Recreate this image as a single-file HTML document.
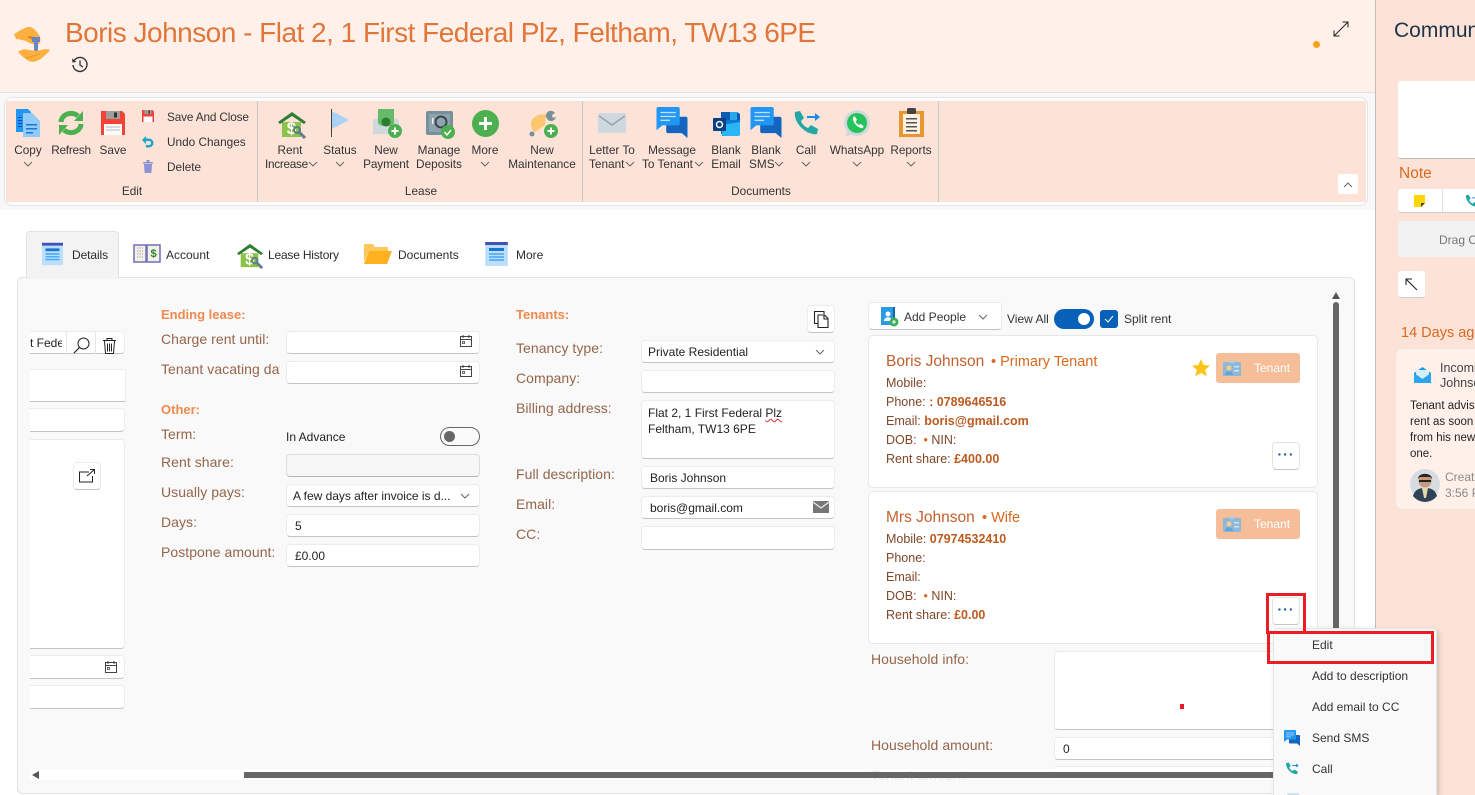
<!DOCTYPE html>
<html><head><meta charset="utf-8"><title>Boris Johnson</title>
<style>
html,body{margin:0;padding:0}
body{width:1475px;height:795px;overflow:hidden;position:relative;background:#fff;font-family:"Liberation Sans",sans-serif;font-size:12px;color:#333}
.a,.t,.c,.i,.l,svg.s{position:absolute}
.t{white-space:nowrap;line-height:16px}
.c{white-space:nowrap;line-height:16px;width:100px;text-align:center}
.r{color:#333;font-size:11.8px}
.l{white-space:nowrap;line-height:16px;font-size:14px;color:#95654a;letter-spacing:.05px}
.h{position:absolute;white-space:nowrap;line-height:16px;font-size:13px;font-weight:bold;color:#ee8a4e}
.i{box-sizing:border-box;background:#fff;border:1px solid #ececec;border-bottom:1px solid #c4c4c4;border-radius:4px}
.v{position:absolute;white-space:nowrap;line-height:16px;font-size:12px;color:#222}
.k{position:absolute;white-space:nowrap;line-height:16px;font-size:12.5px;color:#7f4526}
.k b{color:#bd5a1f;font-weight:bold}
.card{position:absolute;box-sizing:border-box;left:868px;width:450px;height:153px;background:#fff;border:1px solid #e8e8e8;border-radius:5px}
.tag{position:absolute;left:1216px;width:84px;height:30px;background:#f5bd98;border-radius:3px;color:#fff;line-height:30px;font-size:12px;text-indent:38px}
.dots{position:absolute;box-sizing:border-box;left:1272px;width:28px;height:28px;background:#fff;border:1px solid #e4e4e4;border-bottom:1px solid #c4c4c4;border-radius:4px;color:#174f8c;text-align:center;line-height:22px;font-size:14px;font-weight:bold;letter-spacing:1px}
.m{position:absolute;left:1312px;white-space:nowrap;line-height:16px;font-size:12px;color:#333}
svg{overflow:visible}
</style></head><body>
<svg width="0" height="0" style="position:absolute">
<symbol id="chev" viewBox="0 0 10 6"><path d="M1 1l4 4 4-4" fill="none" stroke="#666" stroke-width="1"/></symbol>
<symbol id="bubble" viewBox="0 0 32 32"><path d="M10 10h20a2 2 0 012 2v20l-6-5H12a2 2 0 01-2-2z" fill="#1565c0"/><path d="M2 0h20a2 2 0 012 2v15a2 2 0 01-2 2H6l-6 5V2a2 2 0 012-2z" fill="#2196f3"/><path d="M4 5h16v1.500H4zM4 9h16v1.500H4zM4 13h10v1.500H4z" fill="#bbdefb"/></symbol>
<symbol id="phone" viewBox="0 0 27 26"><path d="M2 2l5-1 4 7-3 3c1 3 4 6 7 7l3-3 7 4-1 5c-10 2-24-11-22-22z" fill="#26a6a6"/><path d="M14 6h8V3l5 4-5 4V8h-8z" fill="#1e88e5"/></symbol>
<symbol id="doc" viewBox="0 0 30 32"><rect y="0" width="30" height="32" fill="#bbdefb"/><rect width="30" height="4" fill="#3f51b5"/><rect x="5" y="8" width="20" height="4" fill="#1976d2"/><path d="M5 15h20v2H5zM5 19h20v2H5zM5 23h20v2H5z" fill="#42a5f5"/></symbol>
<symbol id="house" viewBox="0 0 28 28"><path d="M4 11h19v15H4z" fill="#8bc34a"/><path d="M0 11L14 1l14 10-2 2-12-8-12 8z" fill="#2e7d32"/><text x="13.500" y="23" font-size="17" font-weight="bold" fill="#fff" text-anchor="middle" font-family="Liberation Sans">$</text><path d="M20 20l7 7" stroke="#607d8b" stroke-width="3"/><circle cx="19" cy="19" r="3" fill="none" stroke="#607d8b" stroke-width="2"/></symbol>
<symbol id="cal" viewBox="0 0 12 12"><path d="M.5 1.500h11v10H.5zM.5 4.500h11M3 0v3M9 0v3" fill="none" stroke="#444"/><rect x="2.500" y="6.500" width="2" height="2" fill="none" stroke="#444" stroke-width=".8"/></symbol>
<symbol id="badge" viewBox="0 0 18 16"><rect y="2" width="18" height="14" rx="1" fill="#8fb8d8"/><circle cx="6" cy="8" r="2.500" fill="#f8cf8a"/><path d="M2 15c0-5 8-5 8 0z" fill="#5fa5d8"/><path d="M11 6h5v1.500h-5zM11 10h5v1.500h-5z" fill="#cfe3f2"/><rect x="7" y="0" width="4" height="3" fill="#b9cbd8"/></symbol>
</svg>

<!-- header -->
<div class="a" style="left:0;top:0;width:1375px;height:93px;background:#fff1ea;border-bottom:1px solid #e2e2e2;box-sizing:border-box"></div>
<svg class="s" style="left:13px;top:26px" width="38" height="37" viewBox="0 0 38 37"><path d="M1 8c4-2 9-6 14-7 4-1 8 3 11 8 2 3 2 6 0 9-4 1-9 0-13-3C9 14 5 13 3 13z" fill="#fbb040"/><path d="M14 11c3-2 7-1 9 2l-4 1z" fill="#d98a1e"/><path d="M19 11h8v5h-2v8l-2 3-2-3v-8h-2z" fill="#6a83c4"/><path d="M5 26c3-3 8-3 11-2l8 1c4-1 8-3 13-1-2 3-5 5-8 8-4 3-9 5-13 3-4-2-8-6-11-9z" fill="#fbb040"/><path d="M13 32l14-4" stroke="#e39a2d" stroke-width="1"/></svg>
<div class="t" style="left:65px;top:15px;line-height:36px;font-size:28px;color:#e0763a;letter-spacing:-.51px">Boris Johnson - Flat 2, 1 First Federal Plz, Feltham, TW13 6PE</div>
<svg class="s" style="left:71px;top:56px" width="17" height="17" viewBox="0 0 17 17"><path d="M3.200 4.500A7 7 0 112 9" fill="none" stroke="#333" stroke-width="1.400"/><path d="M1 2.500l.5 4 4-.5z" fill="#333"/><path d="M9 4.500V9l3 2" fill="none" stroke="#333" stroke-width="1.300"/></svg>
<div class="a" style="left:1313px;top:41px;width:7px;height:7px;border-radius:50%;background:#f9a11b"></div>
<svg class="s" style="left:1333px;top:21px" width="16" height="16" viewBox="0 0 16 16"><path d="M1 15L15 1M9.500 1H15v5.500M1 9.500V15h5.500" fill="none" stroke="#222" stroke-width="1"/></svg>

<!-- ribbon band -->
<div class="a" style="left:0;top:93px;width:1375px;height:117px;background:#f8f8f8"></div>
<div class="a" style="left:4px;top:97px;width:1364px;height:109px;box-sizing:border-box;background:#fff;border:1px solid #e4e4e4;border-radius:8px"></div>
<div class="a" style="left:6px;top:101px;width:1360px;height:101px;background:#fde3d7"></div>
<div class="a" style="left:257px;top:101px;width:1px;height:101px;background:#c4c8cc"></div>
<div class="a" style="left:582px;top:101px;width:1px;height:101px;background:#c4c8cc"></div>
<div class="a" style="left:938px;top:101px;width:1px;height:101px;background:#c4c8cc"></div>

<!-- ribbon icons -->
<svg class="s" style="left:16px;top:109px" width="24" height="28" viewBox="0 0 24 28"><path d="M0 0h12l3 3v20H0z" fill="#2196f3"/><path d="M7 4h9l8 8v16H7z" fill="#90caf9"/><path d="M10 15h11v1.500H10zM10 19h11v1.500H10zM10 23h7v1.500h-7z" fill="#1976d2"/><path d="M2 8h4v1H2zM2 11h4v1H2zM2 14h4v1H2zM2 17h4v1H2z" fill="#0d47a1"/></svg>
<svg class="s" style="left:59px;top:111px" width="24" height="24" viewBox="0 0 24 24"><path d="M2 11A10 9 0 0119 5" fill="none" stroke="#4caf50" stroke-width="5"/><path d="M15 10h9V0z" fill="#4caf50"/><path d="M22 13A10 9 0 015 19" fill="none" stroke="#4caf50" stroke-width="5"/><path d="M9 14H0v10z" fill="#4caf50"/></svg>
<svg class="s" style="left:101px;top:111px" width="24" height="24" viewBox="0 0 24 24"><path d="M0 0h21l3 3v21H0z" fill="#f44336"/><rect x="3" y="13" width="18" height="11" fill="#fafafa"/><path d="M5 16h14M5 19h14" stroke="#bbb"/><rect x="5" y="0" width="14" height="8" fill="#9e9e9e"/><rect x="13" y="1.500" width="3" height="5" fill="#333"/></svg>
<svg class="s" style="left:142px;top:110px" width="12" height="12" viewBox="0 0 24 24"><path d="M0 0h21l3 3v21H0z" fill="#f44336"/><rect x="3" y="13" width="18" height="11" fill="#fafafa"/><rect x="5" y="0" width="14" height="8" fill="#9e9e9e"/><rect x="13" y="1" width="3" height="6" fill="#333"/></svg>
<svg class="s" style="left:142px;top:136px" width="12" height="12" viewBox="0 0 12 12"><path d="M0 4l4-4v2.500h3a4.500 4.500 0 010 9H4V9h3a2 2 0 000-4H4v3z" fill="#1aa6c8"/></svg>
<svg class="s" style="left:143px;top:160px" width="10" height="13" viewBox="0 0 10 13"><path d="M0 2h10v1.500H0zM3.500 0h3v2h-3z" fill="#8b93d0"/><path d="M1 4h8l-.6 9H1.600z" fill="#8b93d0"/></svg>
<svg class="s" style="left:278px;top:111px" width="28" height="28"><use href="#house" width="28" height="28"/></svg>
<svg class="s" style="left:331px;top:109px" width="18" height="28" viewBox="0 0 18 28"><rect width="1" height="28" fill="#444"/><path d="M1 2l17 9-17 9z" fill="#a9d2f5"/></svg>
<svg class="s" style="left:373px;top:109px" width="29" height="29" viewBox="0 0 29 29"><path d="M0 11l13-6 13 6v14H0z" fill="#cfd8dc"/><rect x="5" y="0" width="16" height="17" fill="#66bb6a"/><circle cx="13" cy="13" r="4.500" fill="#2e7d32"/><path d="M0 11l13 9 13-9v14H0z" fill="#cfd8dc"/><circle cx="22" cy="22" r="7" fill="#4caf50"/><path d="M18.500 21h7v2h-7zM21 18.500h2v7h-2z" fill="#fff"/></svg>
<svg class="s" style="left:426px;top:111px" width="29" height="28" viewBox="0 0 29 28"><rect width="27" height="24" rx="2" fill="#78909c"/><rect x="3" y="3" width="21" height="18" fill="#90a4ae"/><circle cx="15" cy="11" r="5.500" fill="none" stroke="#37474f" stroke-width="2"/><rect x="6" y="7" width="1.500" height="6" fill="#eceff1"/><circle cx="22" cy="21" r="7" fill="#4caf50"/><path d="M18.500 21l2.500 3 4-5" fill="none" stroke="#fff" stroke-width="1.500"/></svg>
<svg class="s" style="left:472px;top:110px" width="27" height="27" viewBox="0 0 27 27"><circle cx="13.500" cy="13.500" r="13.500" fill="#4caf50"/><path d="M7 12h13v3H7zM12 7h3v13h-3z" fill="#fff"/></svg>
<svg class="s" style="left:529px;top:110px" width="29" height="28" viewBox="0 0 29 28"><path d="M3 10c3-5 10-7 14-5l-1 10-10 7c-4-2-5-8-3-12z" fill="#fdc66f"/><path d="M17 7a5 5 0 019-4l-3 2 1 3 3-1a5 5 0 01-8 3z" fill="#78909c"/><circle cx="3" cy="24" r="2.500" fill="#78909c"/><circle cx="22" cy="21" r="7" fill="#4caf50"/><path d="M18.500 20h7v2h-7zM21 17.500h2v7h-2z" fill="#fff"/></svg>
<svg class="s" style="left:598px;top:113px" width="28" height="20" viewBox="0 0 28 20"><rect width="28" height="20" rx="2" fill="#cfd8dc"/><path d="M1 3l13 9 13-9" fill="none" stroke="#90a4ae" stroke-width="1.400"/></svg>
<svg class="s" style="left:656px;top:107px" width="32" height="31"><use href="#bubble" width="32" height="31"/></svg>
<svg class="s" style="left:713px;top:111px" width="27" height="26" viewBox="0 0 27 26"><path d="M8 1h16l3 2v20H8z" fill="#0a5bb5"/><path d="M17 1h7v8h-7z" fill="#28a8ea"/><path d="M8 9h19v8H8z" fill="#0f78d4"/><path d="M9 14l18-3v12a2 2 0 01-2 2H9z" fill="#29b6f6"/><rect y="7" width="13" height="13" rx="1" fill="#0a3f80"/><circle cx="6.500" cy="13.500" r="3" fill="none" stroke="#fff" stroke-width="1.500"/></svg>
<svg class="s" style="left:750px;top:107px" width="32" height="31"><use href="#bubble" width="32" height="31"/></svg>
<svg class="s" style="left:793px;top:110px" width="27" height="26"><use href="#phone" width="27" height="26"/></svg>
<svg class="s" style="left:844px;top:110px" width="26" height="28" viewBox="0 0 26 28"><circle cx="13" cy="13" r="13" fill="#cfd8dc"/><path d="M1 27l3-7 5 4z" fill="#cfd8dc"/><circle cx="13" cy="13" r="10" fill="#25c35a"/><path d="M9 7l2-.5 2 3.500-1.500 1.500c.7 1.500 2 2.800 3.500 3.500L16.500 14l3 2-.5 2c-5 1-11-6-10-11z" fill="#fff"/></svg>
<svg class="s" style="left:899px;top:108px" width="25" height="29" viewBox="0 0 25 29"><rect y="3" width="25" height="26" fill="#e8962f"/><rect x="4" y="6" width="17" height="20" fill="#fdf1e3"/><rect x="8" y="0" width="9" height="6" rx="1.500" fill="#444"/><path d="M7 10h11v1.500H7zM7 14h11v1.500H7zM7 18h11v1.500H7zM7 22h11v1.500H7z" fill="#555"/></svg>

<!-- ribbon labels -->
<div class="c r" style="left:-22px;top:142px">Copy</div>
<svg class="s" style="left:23px;top:161px" width="10" height="6"><use href="#chev"/></svg>
<div class="c r" style="left:21px;top:142px;letter-spacing:-.25px">Refresh</div>
<div class="c r" style="left:63px;top:142px">Save</div>
<div class="t r" style="left:167px;top:109px;letter-spacing:-.15px">Save And Close</div>
<div class="t r" style="left:167px;top:134px">Undo Changes</div>
<div class="t r" style="left:167px;top:159px">Delete</div>
<div class="c r" style="left:82px;top:183px">Edit</div>

<div class="c r" style="left:240px;top:142px">Rent</div>
<div class="t r" style="left:265px;top:156px;letter-spacing:-.3px">Increase</div>
<svg class="s" style="left:308px;top:161px" width="10" height="6"><use href="#chev"/></svg>
<div class="c r" style="left:290px;top:142px">Status</div>
<svg class="s" style="left:335px;top:161px" width="10" height="6"><use href="#chev"/></svg>
<div class="c r" style="left:336px;top:142px">New</div>
<div class="c r" style="left:336px;top:156px;letter-spacing:-.1px">Payment</div>
<div class="c r" style="left:389px;top:142px">Manage</div>
<div class="c r" style="left:389px;top:156px">Deposits</div>
<div class="c r" style="left:435px;top:142px">More</div>
<svg class="s" style="left:480px;top:161px" width="10" height="6"><use href="#chev"/></svg>
<div class="c r" style="left:492px;top:142px">New</div>
<div class="c r" style="left:492px;top:156px">Maintenance</div>
<div class="c r" style="left:371px;top:183px">Lease</div>

<div class="c r" style="left:562px;top:142px">Letter To</div>
<div class="t r" style="left:589px;top:156px">Tenant</div>
<svg class="s" style="left:625px;top:161px" width="10" height="6"><use href="#chev"/></svg>
<div class="c r" style="left:622px;top:142px">Message</div>
<div class="t r" style="left:642px;top:156px">To Tenant</div>
<svg class="s" style="left:694px;top:161px" width="10" height="6"><use href="#chev"/></svg>
<div class="c r" style="left:676px;top:142px">Blank</div>
<div class="c r" style="left:676px;top:156px">Email</div>
<div class="c r" style="left:716px;top:142px">Blank</div>
<div class="t r" style="left:749px;top:156px">SMS</div>
<svg class="s" style="left:774px;top:161px" width="10" height="6"><use href="#chev"/></svg>
<div class="c r" style="left:756px;top:142px">Call</div>
<svg class="s" style="left:801px;top:161px" width="10" height="6"><use href="#chev"/></svg>
<div class="c r" style="left:807px;top:142px">WhatsApp</div>
<svg class="s" style="left:852px;top:161px" width="10" height="6"><use href="#chev"/></svg>
<div class="c r" style="left:861px;top:142px">Reports</div>
<svg class="s" style="left:906px;top:161px" width="10" height="6"><use href="#chev"/></svg>
<div class="c r" style="left:711px;top:183px">Documents</div>
<div class="a" style="left:1338px;top:174px;width:20px;height:20px;background:#fff;border-radius:3px"></div>
<svg class="s" style="left:1343px;top:182px" width="10" height="6" viewBox="0 0 10 6"><path d="M1 5l4-4 4 4" fill="none" stroke="#666"/></svg>

<!-- tabs -->
<div class="a" style="left:26px;top:231px;width:93px;height:47px;box-sizing:border-box;background:#f3f3f3;border:1px solid #e2e2e2;border-bottom:0;border-radius:4px 4px 0 0"></div>
<svg class="s" style="left:42px;top:242px" width="21" height="24"><use href="#doc" width="21" height="24"/></svg>
<div class="t" style="left:72px;top:247px;color:#2c2c2c;letter-spacing:-.1px">Details</div>
<svg class="s" style="left:133px;top:244px" width="28" height="20" viewBox="0 0 28 20"><path d="M1 1h12v17H1zM14 1h13v17H14z" fill="#f4f0e6" stroke="#6c6fb5" stroke-width="1.500"/><path d="M4 4h6M4 7h6M4 10h6M4 13h6" stroke="#aaa" stroke-dasharray="1.500 1"/><text x="20.500" y="13" font-size="11" font-weight="bold" fill="#2e7d32" text-anchor="middle" font-family="Liberation Sans">$</text></svg>
<div class="t" style="left:166px;top:247px;color:#2c2c2c">Account</div>
<svg class="s" style="left:237px;top:243px" width="26" height="26"><use href="#house" width="26" height="26"/></svg>
<div class="t" style="left:268px;top:247px;color:#2c2c2c;letter-spacing:-.2px">Lease History</div>
<svg class="s" style="left:364px;top:244px" width="28" height="20" viewBox="0 0 28 20"><path d="M0 0h9l2 3h13v4H5L0 18z" fill="#ffc65c"/><path d="M5 7h23l-5 13H0z" fill="#ffb01f"/></svg>
<div class="t" style="left:398px;top:247px;color:#2c2c2c">Documents</div>
<svg class="s" style="left:485px;top:242px" width="23" height="24"><use href="#doc" width="23" height="24"/></svg>
<div class="t" style="left:516px;top:247px;color:#2c2c2c">More</div>

<!-- main panel -->
<div class="a" style="left:17px;top:277px;width:1338px;height:517px;box-sizing:border-box;background:#f9f9f9;border:1px solid #e2e2e2;border-radius:6px"></div>
<div class="a" style="left:27px;top:277px;width:91px;height:2px;background:#f3f3f3"></div>

<!-- clipped left column -->
<div class="i" style="left:30px;top:331px;width:95px;height:23px;border-left:0;border-radius:0 4px 4px 0"></div>
<div class="a" style="left:30px;top:332px;width:32px;height:20px;overflow:hidden"><div class="v" style="left:0;top:3px">t Federal</div></div>
<div class="a" style="left:66px;top:331px;width:1px;height:23px;background:#e6e6e6"></div>
<div class="a" style="left:95px;top:331px;width:1px;height:23px;background:#e6e6e6"></div>
<svg class="s" style="left:73px;top:337px" width="17" height="17" viewBox="0 0 17 17"><circle cx="10.500" cy="6.500" r="5.500" fill="none" stroke="#222"/><path d="M6.500 10.500L1 16" stroke="#222" stroke-width="1.200"/></svg>
<svg class="s" style="left:103px;top:338px" width="13" height="16" viewBox="0 0 13 16"><path d="M0 2.500h13M4 2.500V.5h5v2M1.500 3l1 12.500h8l1-12.500M4.500 5.500v8M6.500 5.500v8M8.500 5.500v8" fill="none" stroke="#222"/></svg>
<div class="i" style="left:30px;top:369px;width:96px;height:33px;border-left:0;border-radius:0"></div>
<div class="i" style="left:30px;top:408px;width:95px;height:24px;border-left:0;border-radius:0 4px 4px 0"></div>
<div class="i" style="left:30px;top:439px;width:95px;height:210px;border-left:0;border-radius:0 4px 4px 0"></div>
<div class="i" style="left:73px;top:462px;width:28px;height:28px;background:#fff"></div>
<svg class="s" style="left:79px;top:469px" width="16" height="14" viewBox="0 0 16 14"><path d="M10 3H.5v10h13V7M8 7l7-6M11 .5h4.500V5" fill="none" stroke="#222"/></svg>
<div class="i" style="left:30px;top:655px;width:95px;height:24px;border-left:0;border-radius:0 4px 4px 0"></div>
<svg class="s" style="left:105px;top:661px" width="12" height="12"><use href="#cal"/></svg>
<div class="i" style="left:30px;top:685px;width:95px;height:24px;border-left:0;border-radius:0 4px 4px 0"></div>

<!-- ending lease -->
<div class="h" style="left:161px;top:307px">Ending lease:</div>
<div class="l" style="left:161px;top:331px">Charge rent until:</div>
<div class="a" style="left:161px;top:361px;width:119px;height:18px;overflow:hidden"><div class="l" style="left:0;top:0">Tenant vacating date:</div></div>
<div class="i" style="left:286px;top:331px;width:194px;height:23px"></div>
<svg class="s" style="left:460px;top:335px" width="12" height="12"><use href="#cal"/></svg>
<div class="i" style="left:286px;top:361px;width:194px;height:23px"></div>
<svg class="s" style="left:460px;top:365px" width="12" height="12"><use href="#cal"/></svg>
<div class="h" style="left:161px;top:402px">Other:</div>
<div class="l" style="left:161px;top:426px">Term:</div>
<div class="v" style="left:286px;top:429px">In Advance</div>
<div class="a" style="left:440px;top:427px;width:40px;height:19px;box-sizing:border-box;border:1px solid #666;border-radius:10px;background:#fafafa"></div>
<div class="a" style="left:444px;top:431px;width:11px;height:11px;border-radius:50%;background:#666"></div>
<div class="l" style="left:161px;top:454px">Rent share:</div>
<div class="i" style="left:286px;top:454px;width:194px;height:23px;background:#f7f7f7;border:1px solid #ddd;border-bottom:1px solid #b5b5b5"></div>
<div class="l" style="left:161px;top:484px">Usually pays:</div>
<div class="i" style="left:286px;top:484px;width:194px;height:23px"></div>
<div class="v" style="left:293px;top:488px;letter-spacing:-.02px">A few days after invoice is d...</div>
<svg class="s" style="left:460px;top:493px" width="10" height="6"><use href="#chev"/></svg>
<div class="l" style="left:161px;top:514px">Days:</div>
<div class="i" style="left:286px;top:514px;width:194px;height:23px"></div>
<div class="v" style="left:295px;top:518px">5</div>
<div class="l" style="left:161px;top:544px">Postpone amount:</div>
<div class="i" style="left:286px;top:544px;width:194px;height:23px"></div>
<div class="v" style="left:295px;top:548px">£0.00</div>

<!-- tenants -->
<div class="h" style="left:516px;top:307px">Tenants:</div>
<div class="i" style="left:807px;top:305px;width:28px;height:28px"></div>
<svg class="s" style="left:814px;top:311px" width="15" height="17" viewBox="0 0 15 17"><path d="M10 3V.5H.5v12H4M4 4h6.500L14 7.500v9H4zM10 4v4h4" fill="none" stroke="#222" stroke-width="1.100"/></svg>
<div class="l" style="left:516px;top:340px">Tenancy type:</div>
<div class="i" style="left:641px;top:340px;width:194px;height:23px"></div>
<div class="v" style="left:648px;top:344px">Private Residential</div>
<svg class="s" style="left:815px;top:349px" width="10" height="6"><use href="#chev"/></svg>
<div class="l" style="left:516px;top:370px">Company:</div>
<div class="i" style="left:641px;top:370px;width:194px;height:23px"></div>
<div class="l" style="left:516px;top:400px">Billing address:</div>
<div class="i" style="left:641px;top:400px;width:194px;height:59px"></div>
<div class="v" style="left:648px;top:405px">Flat 2, 1 First Federal <span style="text-decoration:underline wavy #e03030 1px">Plz</span></div>
<div class="v" style="left:648px;top:421px">Feltham, TW13 6PE</div>
<div class="l" style="left:516px;top:466px">Full description:</div>
<div class="i" style="left:641px;top:466px;width:194px;height:23px"></div>
<div class="v" style="left:650px;top:470px">Boris Johnson</div>
<div class="l" style="left:516px;top:496px">Email:</div>
<div class="i" style="left:641px;top:496px;width:194px;height:23px"></div>
<div class="v" style="left:650px;top:500px">boris@gmail.com</div>
<svg class="s" style="left:813px;top:501px" width="16" height="12" viewBox="0 0 16 12"><rect width="16" height="12" fill="#777"/><path d="M0 1l8 6 8-6" fill="none" stroke="#eee" stroke-width="1.200"/></svg>
<div class="l" style="left:516px;top:526px">CC:</div>
<div class="i" style="left:641px;top:526px;width:194px;height:24px"></div>

<!-- people -->
<div class="i" style="left:868px;top:302px;width:134px;height:28px"></div>
<svg class="s" style="left:881px;top:307px" width="18" height="20" viewBox="0 0 18 20"><rect width="14" height="18" fill="#2a9be0"/><rect x="12" y="0" width="2" height="18" fill="#1565a8"/><circle cx="7" cy="7" r="2.500" fill="#fff"/><path d="M3 14c0-5 8-5 8 0z" fill="#fff"/><circle cx="13" cy="15" r="4.500" fill="#3fae5a"/><path d="M11 14.500h4v1h-4zM12.500 13h1v4h-1z" fill="#fff"/></svg>
<div class="v" style="left:904px;top:309px;color:#333">Add People</div>
<svg class="s" style="left:978px;top:314px" width="10" height="6"><use href="#chev"/></svg>
<div class="v" style="left:1007px;top:311px;color:#333">View All</div>
<div class="a" style="left:1054px;top:309px;width:40px;height:20px;background:#0860b8;border-radius:10px"></div>
<div class="a" style="left:1078px;top:313px;width:12px;height:12px;background:#fff;border-radius:50%"></div>
<div class="a" style="left:1100px;top:310px;width:18px;height:18px;background:#0860b8;border-radius:3px"></div>
<svg class="s" style="left:1104px;top:315px" width="10" height="8" viewBox="0 0 10 8"><path d="M1 4l3 3 5-6" fill="none" stroke="#fff"/></svg>
<div class="v" style="left:1124px;top:311px;color:#333">Split rent</div>

<div class="card" style="top:335px"></div>
<div class="t" style="left:886px;top:354px;font-size:15.500px;color:#c25f2c">Boris Johnson</div>
<div class="t" style="left:991px;top:354px;font-size:14.500px;color:#d9691f">• Primary Tenant</div>
<div class="k" style="left:886px;top:375px">Mobile:</div>
<div class="k" style="left:886px;top:394px">Phone: <b>: 0789646516</b></div>
<div class="k" style="left:886px;top:413px">Email: <b>boris@gmail.com</b></div>
<div class="k" style="left:886px;top:432px">DOB: &nbsp;<span style="color:#d9691f">•</span> NIN:</div>
<div class="k" style="left:886px;top:451px">Rent share: <b>£400.00</b></div>
<svg class="s" style="left:1192px;top:359px" width="18" height="18" viewBox="0 0 18 18"><path d="M9 0l2.700 6 6.300.6-4.800 4.200 1.500 6.400L9 14l-5.700 3.200 1.500-6.400L0 6.600 6.300 6z" fill="#fcc419"/></svg>
<div class="tag" style="top:353px">Tenant</div>
<svg class="s" style="left:1223px;top:360px" width="18" height="16"><use href="#badge"/></svg>
<div class="dots" style="top:442px">···</div>

<div class="card" style="top:491px"></div>
<div class="t" style="left:886px;top:510px;font-size:15.500px;color:#c25f2c">Mrs Johnson</div>
<div class="t" style="left:982px;top:510px;font-size:14.500px;color:#d9691f">• Wife</div>
<div class="k" style="left:886px;top:531px">Mobile: <b>07974532410</b></div>
<div class="k" style="left:886px;top:550px">Phone:</div>
<div class="k" style="left:886px;top:569px">Email:</div>
<div class="k" style="left:886px;top:588px">DOB: &nbsp;<span style="color:#d9691f">•</span> NIN:</div>
<div class="k" style="left:886px;top:607px">Rent share: <b>£0.00</b></div>
<div class="tag" style="top:509px">Tenant</div>
<svg class="s" style="left:1223px;top:516px" width="18" height="16"><use href="#badge"/></svg>
<div class="dots" style="top:597px">···</div>

<div class="l" style="left:871px;top:651px">Household info:</div>
<div class="i" style="left:1054px;top:651px;width:264px;height:79px;border-radius:4px 0 0 4px;border-right:0"></div>
<div class="a" style="left:1180px;top:704px;width:4px;height:5px;background:#ed1c24"></div>
<div class="l" style="left:871px;top:737px">Household amount:</div>
<div class="i" style="left:1054px;top:737px;width:264px;height:23px;border-radius:4px 0 0 4px;border-right:0"></div>
<div class="v" style="left:1063px;top:741px">0</div>
<div class="i" style="left:1054px;top:766px;width:264px;height:14px;border-radius:4px 0 0 0;border-right:0;border-bottom:0"></div>
<div class="a" style="left:871px;top:767px;width:140px;height:13px;overflow:hidden"><div class="l" style="left:0;top:0">Tenant amount:</div></div>

<!-- scrollbars -->
<div class="a" style="left:1318px;top:280px;width:36px;height:490px;background:#f9f9f9"></div>
<svg class="s" style="left:1332px;top:292px" width="8" height="7"><path d="M4 0l4 7H0z" fill="#555"/></svg>
<div class="a" style="left:1333px;top:302px;width:6px;height:468px;background:#666;border-radius:3px 3px 0 0"></div>
<div class="a" style="left:30px;top:769px;width:1243px;height:11px;background:rgba(255,255,255,.86)"></div>
<svg class="s" style="left:32px;top:771px" width="7" height="8"><path d="M0 4l7-4v8z" fill="#555"/></svg>
<div class="a" style="left:244px;top:772px;width:1029px;height:6px;background:#666"></div>

<!-- sidebar -->
<div class="a" style="left:1375px;top:0;width:100px;height:795px;background:#fde3d7;border-left:1px solid #c0bcb9;box-sizing:border-box;overflow:hidden">
<div class="t" style="left:18px;top:18px;line-height:26px;font-size:21px;color:#1f3448">Commun</div>
<div class="a" style="left:22px;top:81px;width:77px;height:78px;background:#fff;border-radius:3px 0 0 3px;border-bottom:1px solid #bbb;box-sizing:border-box"></div>
<div class="t" style="left:23px;top:166px;font-size:15.500px;color:#d9691f">Note</div>
<div class="a" style="left:22px;top:189px;width:77px;height:24px;background:#fff;border-radius:4px 0 0 4px;border-bottom:1px solid #ccc;box-sizing:border-box"></div>
<div class="a" style="left:66px;top:189px;width:1px;height:24px;background:#ddd"></div>
<svg class="s" style="left:38px;top:195px" width="11" height="12" viewBox="0 0 11 12"><path d="M0 0h11v8l-3 4H0z" fill="#ffd600"/><path d="M7 12l4-4H7z" fill="#444"/></svg>
<div class="a" style="left:89px;top:194px;width:10px;height:14px;overflow:hidden"><svg class="s" style="left:0;top:0" width="14" height="14"><use href="#phone" width="14" height="14"/></svg></div>
<div class="a" style="left:22px;top:221px;width:77px;height:36px;background:#f2f2f2;border-radius:4px 0 0 4px"></div>
<div class="t" style="left:63px;top:232px;color:#777">Drag C</div>
<div class="a" style="left:22px;top:271px;width:27px;height:27px;background:#fff;border-radius:3px;border-bottom:1px solid #ccc;box-sizing:border-box"></div>
<svg class="s" style="left:29px;top:278px" width="12" height="12" viewBox="0 0 12 12"><path d="M12 12L1 1M1 7V1h6" fill="none" stroke="#222" stroke-width="1.100"/></svg>
<div class="t" style="left:25px;top:325px;font-size:14.500px;color:#d9691f">14 Days ago</div>
<div class="a" style="left:19px;top:348px;width:90px;height:162px;box-sizing:border-box;background:#fff1ea;border:1px solid #f0e4dd;border-radius:8px"></div>
<svg class="s" style="left:38px;top:367px" width="17" height="16" viewBox="0 0 17 16"><path d="M0 6l8.500-6L17 6v10H0z" fill="#1e9be6"/><path d="M2 3h13v5l-6.500 4L2 8z" fill="#d7effb"/><path d="M0 6l8.500 6L17 6v10H0z" fill="#2aa5ee"/></svg>
<div class="t" style="left:64px;top:360px;color:#444;font-size:12.500px">Incoming</div>
<div class="t" style="left:64px;top:375px;color:#444;font-size:12.500px">Johnson</div>
<div class="v" style="left:34px;top:398px;font-size:11.500px">Tenant advised</div>
<div class="v" style="left:34px;top:414px;font-size:11.500px">rent as soon as</div>
<div class="v" style="left:34px;top:430px;font-size:11.500px">from his new</div>
<div class="v" style="left:34px;top:446px;font-size:11.500px">one.</div>
<svg class="s" style="left:34px;top:469px" width="30" height="30" viewBox="0 0 30 30"><circle cx="15" cy="15" r="15" fill="#d5dde2"/><path d="M3 27c2-7 7-8 12-8s10 1 12 8a15 15 0 01-24 0z" fill="#2f4256"/><path d="M12 19h6l-2 10h-2z" fill="#e4d7a8"/><circle cx="15" cy="12" r="6.500" fill="#c9997c"/><path d="M8 10c0-7 14-7 14 0l-2-2H10z" fill="#2a2522"/><path d="M9 11h12v2H9z" fill="#222"/></svg>
<div class="t" style="left:69px;top:469px;color:#8a8a8a">Created</div>
<div class="t" style="left:69px;top:485px;color:#8a8a8a">3:56 PM</div>
</div>

<!-- context menu -->
<div class="a" style="left:1273px;top:628px;width:164px;height:167px;background:#f9f9f9;border:1px solid #e6e6e6;border-bottom:0;box-sizing:border-box;border-radius:4px 4px 0 0;box-shadow:2px 2px 5px rgba(0,0,0,.18)"></div>
<div class="m" style="top:637px">Edit</div>
<div class="m" style="top:668px">Add to description</div>
<div class="m" style="top:699px">Add email to CC</div>
<div class="m" style="top:730px">Send SMS</div>
<div class="m" style="top:761px">Call</div>
<svg class="s" style="left:1284px;top:730px" width="16" height="16"><use href="#bubble" width="16" height="16"/></svg>
<svg class="s" style="left:1285px;top:762px" width="14" height="13"><use href="#phone" width="14" height="13"/></svg>
<div class="a" style="left:1287px;top:793px;width:12px;height:2px;background:#cfe3ee;border-radius:6px 6px 0 0"></div>

<!-- red annotations -->
<div class="a" style="left:1266px;top:593px;width:40px;height:41px;box-sizing:border-box;border:3px solid #ed1c24"></div>
<div class="a" style="left:1267px;top:631px;width:167px;height:33px;box-sizing:border-box;border:3px solid #ed1c24"></div>
</body></html>
